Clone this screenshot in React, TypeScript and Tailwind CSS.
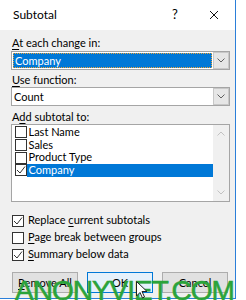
import { FC, ReactNode } from "react";

const Check: FC = () => (
  <svg width="10" height="10" viewBox="0 0 10 10" className="block">
    <polyline points="1,5 4,8 9,1.5" fill="none" stroke="#333" strokeWidth="1" />
  </svg>
);

const Box: FC<{ checked?: boolean }> = ({ checked }) => (
  <div className="w-[12px] h-[12px] border border-[#333] bg-white flex items-center justify-center shrink-0">
    {checked && <Check />}
  </div>
);

const Chevron: FC<{ up?: boolean; color?: string }> = ({ up, color = "#606060" }) => (
  <svg width="8" height="5" viewBox="0 0 8 5" className="block">
    <polyline
      points={up ? "0.5,4.5 4,1 7.5,4.5" : "0.5,0.5 4,4 7.5,0.5"}
      fill="none"
      stroke={color}
      strokeWidth="1"
    />
  </svg>
);

const Select: FC<{ value: string; active?: boolean }> = ({ value, active }) => (
  <div className="w-[219px] h-[19px] flex border border-[#a5a5a5] bg-white">
    <div className="flex-1 p-[1px]">
      <div
        className={
          active
            ? "h-full bg-[#0078d7] text-white pl-[2px] leading-[15px] outline outline-dotted outline-[#e8a23a] outline-offset-[-1px]"
            : "h-full pl-[1px] leading-[15px]"
        }
      >
        {value}
      </div>
    </div>
    <div className="w-[16px] border border-[#c8c8c8] bg-[#e6e6e6] flex items-center justify-center">
      <Chevron />
    </div>
  </div>
);

const U: FC<{ children: ReactNode }> = ({ children }) => <span className="underline underline-offset-2">{children}</span>;

const fields = [
  { name: "Last Name", checked: false },
  { name: "Sales", checked: false },
  { name: "Product Type", checked: false },
  { name: "Company", checked: true },
];

const App: FC = () => {
  return (
    <div className="w-[246px] h-[300px] bg-white relative overflow-hidden text-[11px] text-black font-['Lato',sans-serif]">
      <div className="w-[236px] h-[299px] border-r border-b border-[#2b7fd9] bg-[#f0f0f0] flex flex-col">
        <div className="h-[30px] bg-white flex items-center pl-[13px] text-[12px]">
          <span className="flex-1">Subtotal</span>
          <span className="w-[10px] text-center text-[13px] mr-[29px]">?</span>
          <svg width="10" height="10" viewBox="0 0 10 10" className="mr-[16px]">
            <path d="M1 1L9 9M9 1L1 9" stroke="#111" strokeWidth="1" />
          </svg>
        </div>
        <div className="pl-[11px] pt-[5px] flex flex-col">
          <div className="h-[16px] leading-[16px] pl-[1px]">
            <U>A</U>t each change in:
          </div>
          <Select value="Company" active />
          <div className="h-[15px] leading-[15px] pl-[1px] mt-[2px]">
            <U>U</U>se function:
          </div>
          <Select value="Count" />
          <div className="h-[15px] leading-[15px] pl-[1px] mt-[3px]">
            A<U>d</U>d subtotal to:
          </div>
          <div className="w-[219px] h-[78px] border border-[#a5a5a5] bg-white flex">
            <div className="flex-1 pl-[3px] pt-[1px] flex flex-col">
              {fields.map((f) => (
                <div key={f.name} className="h-[12.7px] flex items-center">
                  <Box checked={f.checked} />
                  <div
                    className={
                      f.checked
                        ? "flex-1 h-full bg-[#0078d7] text-white pl-[1.5px] leading-[12.7px]"
                        : "flex-1 h-full pl-[1.5px] leading-[12.7px]"
                    }
                  >
                    {f.name}
                  </div>
                </div>
              ))}
            </div>
            <div className="w-[16px] bg-[#f0f0f0] flex flex-col items-center justify-between py-[6px]">
              <Chevron up color="#c2c2c2" />
              <Chevron color="#c2c2c2" />
            </div>
          </div>
          <div className="mt-[10px] flex flex-col">
            <div className="h-[17px] flex items-center gap-[4px] pl-[1px]">
              <Box checked />
              <span>
                Replace <U>c</U>urrent subtotals
              </span>
            </div>
            <div className="h-[17px] flex items-center gap-[4px] pl-[1px]">
              <Box />
              <span>
                <U>P</U>age break between groups
              </span>
            </div>
            <div className="h-[17px] flex items-center gap-[4px] pl-[1px]">
              <Box checked />
              <span>
                <U>S</U>ummary below data
              </span>
            </div>
          </div>
          <div className="mt-[9px] flex gap-[9px] pl-[1px]">
            <button className="w-[66px] h-[21px] border border-[#adadad] bg-[#e1e1e1] leading-[19px]">
              <U>R</U>emove All
            </button>
            <button className="w-[66px] h-[21px] border border-[#0078d7] bg-[#e5f1fb] leading-[19px]">OK</button>
            <button className="w-[66px] h-[21px] border border-[#adadad] bg-[#e1e1e1] leading-[19px]">Cancel</button>
          </div>
        </div>
      </div>
      <div className="absolute left-[15px] top-[277px] text-[28px] leading-none tracking-[-1px] text-[#2ba33a] [-webkit-text-stroke:0.6px_#2ba33a] font-['Liberation_Sans',sans-serif] whitespace-nowrap">
        ANONYVIET.COM
      </div>
      <svg width="12" height="18" viewBox="0 0 12 18" className="absolute left-[136px] top-[281px]">
        <path d="M0.5 0.5V15L4 11.5L6.5 17L8.5 16L6 10.5H11Z" fill="white" stroke="#222" strokeWidth="1" />
      </svg>
    </div>
  );
};

export default App;
